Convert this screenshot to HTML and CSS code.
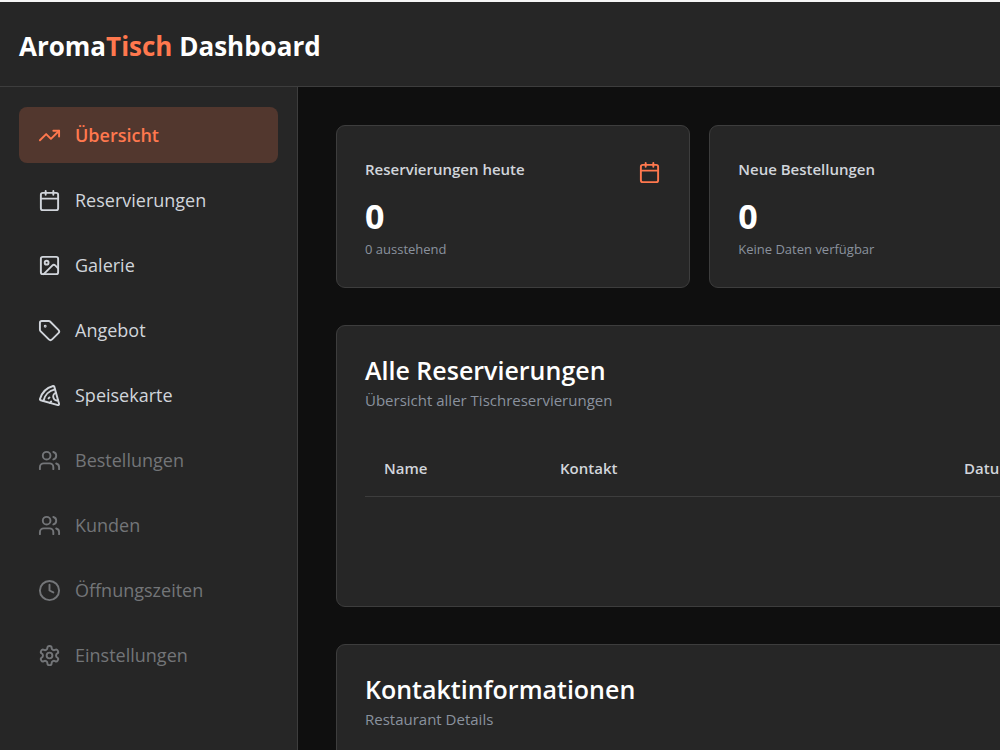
FILE: index.html
```
<!DOCTYPE html>
<html lang="de">

<head>
    <meta charset="UTF-8">
    <meta name="viewport" content="width=device-width, initial-scale=1.0">
    <title>AromaTisch Dashboard</title>
    <link rel="stylesheet" href="styles.css">
</head>

<body>
    <header class="topbar">
        <h1 class="brand">Aroma<span class="brand-accent">Tisch</span> Dashboard</h1>
    </header>

    <div class="layout">
        <!-- Sidebar -->
        <nav class="sidebar">
            <button class="nav-item active" type="button">
                <svg class="icon" viewBox="0 0 24 24"><polyline points="22 7 13.5 15.5 8.5 10.5 2 17" /><polyline points="16 7 22 7 22 13" /></svg>
                Übersicht
            </button>
            <button class="nav-item" type="button">
                <svg class="icon" viewBox="0 0 24 24"><path d="M8 2v4M16 2v4M3 10h18" /><rect x="3" y="4" width="18" height="18" rx="2" /></svg>
                Reservierungen
            </button>
            <button class="nav-item" type="button">
                <svg class="icon" viewBox="0 0 24 24"><rect x="3" y="3" width="18" height="18" rx="2" /><circle cx="9" cy="9" r="2" /><path d="m21 15-3.086-3.086a2 2 0 0 0-2.828 0L6 21" /></svg>
                Galerie
            </button>
            <button class="nav-item" type="button">
                <svg class="icon" viewBox="0 0 24 24"><path d="M12.586 2.586A2 2 0 0 0 11.172 2H4a2 2 0 0 0-2 2v7.172a2 2 0 0 0 .586 1.414l8.704 8.704a2.426 2.426 0 0 0 3.42 0l6.58-6.58a2.426 2.426 0 0 0 0-3.42z" /><circle cx="7.5" cy="7.5" r=".5" fill="currentColor" /></svg>
                Angebot
            </button>
            <button class="nav-item" type="button">
                <svg class="icon" viewBox="0 0 24 24"><path d="m12 14-1 1" /><path d="m13.75 18.25-1.25 1.42" /><path d="M17.775 5.654a15.68 15.68 0 0 0-12.121 12.12" /><path d="M18.8 9.3a1 1 0 0 0 2.1 7.7" /><path d="M21.964 20.732a1 1 0 0 1-1.232 1.232l-18-5a1 1 0 0 1-.695-1.232A19.68 19.68 0 0 1 15.732 2.037a1 1 0 0 1 1.232.695z" /></svg>
                Speisekarte
            </button>
            <button class="nav-item" type="button" disabled>
                <svg class="icon" viewBox="0 0 24 24"><path d="M16 21v-2a4 4 0 0 0-4-4H6a4 4 0 0 0-4 4v2" /><circle cx="9" cy="7" r="4" /><path d="M22 21v-2a4 4 0 0 0-3-3.87" /><path d="M16 3.13a4 4 0 0 1 0 7.75" /></svg>
                Bestellungen
            </button>
            <button class="nav-item" type="button" disabled>
                <svg class="icon" viewBox="0 0 24 24"><path d="M16 21v-2a4 4 0 0 0-4-4H6a4 4 0 0 0-4 4v2" /><circle cx="9" cy="7" r="4" /><path d="M22 21v-2a4 4 0 0 0-3-3.87" /><path d="M16 3.13a4 4 0 0 1 0 7.75" /></svg>
                Kunden
            </button>
            <button class="nav-item" type="button" disabled>
                <svg class="icon" viewBox="0 0 24 24"><circle cx="12" cy="12" r="10" /><polyline points="12 6 12 12 16 14" /></svg>
                Öffnungszeiten
            </button>
            <button class="nav-item" type="button" disabled>
                <svg class="icon" viewBox="0 0 24 24"><path d="M12.22 2h-.44a2 2 0 0 0-2 2v.18a2 2 0 0 1-1 1.73l-.43.25a2 2 0 0 1-2 0l-.15-.08a2 2 0 0 0-2.73.73l-.22.38a2 2 0 0 0 .73 2.73l.15.1a2 2 0 0 1 1 1.72v.51a2 2 0 0 1-1 1.74l-.15.09a2 2 0 0 0-.73 2.73l.22.38a2 2 0 0 0 2.73.73l.15-.08a2 2 0 0 1 2 0l.43.25a2 2 0 0 1 1 1.73V20a2 2 0 0 0 2 2h.44a2 2 0 0 0 2-2v-.18a2 2 0 0 1 1-1.73l.43-.25a2 2 0 0 1 2 0l.15.08a2 2 0 0 0 2.73-.73l.22-.39a2 2 0 0 0-.73-2.73l-.15-.08a2 2 0 0 1-1-1.74v-.5a2 2 0 0 1 1-1.74l.15-.09a2 2 0 0 0 .73-2.73l-.22-.38a2 2 0 0 0-2.73-.73l-.15.08a2 2 0 0 1-2 0l-.43-.25a2 2 0 0 1-1-1.73V4a2 2 0 0 0-2-2z" /><circle cx="12" cy="12" r="3" /></svg>
                Einstellungen
            </button>
        </nav>

        <!-- Content -->
        <main class="content">
            <section class="stats">
                <div class="card">
                    <div class="stat-head">
                        <h3 class="stat-title">Reservierungen heute</h3>
                        <svg class="icon stat-icon" viewBox="0 0 24 24"><path d="M8 2v4M16 2v4M3 10h18" /><rect x="3" y="4" width="18" height="18" rx="2" /></svg>
                    </div>
                    <p class="stat-value">0</p>
                    <p class="stat-note">0 ausstehend</p>
                </div>
                <div class="card">
                    <div class="stat-head">
                        <h3 class="stat-title">Neue Bestellungen</h3>
                    </div>
                    <p class="stat-value">0</p>
                    <p class="stat-note">Keine Daten verfügbar</p>
                </div>
            </section>

            <section class="card reservations">
                <h2 class="card-title">Alle Reservierungen</h2>
                <p class="card-text">Übersicht aller Tischreservierungen</p>
                <table class="table">
                    <thead>
                        <tr>
                            <th class="col-name">Name</th>
                            <th class="col-contact">Kontakt</th>
                            <th>Datum</th>
                        </tr>
                    </thead>
                </table>
            </section>

            <section class="card">
                <h2 class="card-title">Kontaktinformationen</h2>
                <p class="card-text">Restaurant Details</p>
            </section>
        </main>
    </div>
</body>

</html>
```
FILE: styles.css
```
* {
    box-sizing: border-box;
    margin: 0;
    padding: 0;
}

body {
    display: flex;
    flex-direction: column;
    height: 100vh;
    overflow: hidden;
    border-top: 2px solid #f5f5f5;
    background-color: #0f0f0f;
    color: #fff;
    font-family: "Open Sans", "Noto Sans", sans-serif;
}

.topbar {
    padding: 26px 19px 22px;
    background-color: #262626;
    border-bottom: 1px solid #3d3d3d;
}

.brand {
    font-size: 26px;
    font-weight: 700;
    line-height: 36px;
}

.brand-accent {
    color: #ff784e;
}

.layout {
    display: flex;
    flex: 1;
    min-height: 0;
}

/* Sidebar */
.sidebar {
    display: flex;
    flex-direction: column;
    gap: 9px;
    flex: 0 0 298px;
    padding: 20px 19px;
    background-color: #262626;
    border-right: 1px solid #3d3d3d;
}

.nav-item {
    display: flex;
    align-items: center;
    gap: 14px;
    padding: 14px 19px;
    border: none;
    border-radius: 8px;
    background: none;
    color: #d1d5db;
    font-family: inherit;
    font-size: 18px;
    line-height: 28px;
    text-align: left;
    cursor: pointer;
}

.nav-item.active {
    background-color: #52372e;
    color: #ff784e;
    font-weight: 600;
}

.nav-item:disabled {
    color: #737578;
    cursor: default;
}

.icon {
    width: 23px;
    height: 23px;
    flex: none;
    fill: none;
    stroke: currentColor;
    stroke-width: 2;
    stroke-linecap: round;
    stroke-linejoin: round;
}

/* Content */
.content {
    display: flex;
    flex-direction: column;
    gap: 37px;
    flex: 1 0 1550px;
    padding: 38px;
}

.stats {
    display: grid;
    grid-template-columns: repeat(4, 1fr);
    gap: 19px;
}

.card {
    padding: 28px;
    background-color: #262626;
    border: 1px solid #3d3d3d;
    border-radius: 9px;
}

.stat-head {
    display: flex;
    justify-content: space-between;
    align-items: flex-end;
    margin-bottom: 11px;
}

.stat-title {
    color: #d1d5db;
    font-size: 15px;
    font-weight: 600;
    line-height: 30px;
}

.stat-icon {
    color: #ff784e;
}

.stat-value {
    font-size: 34px;
    font-weight: 700;
    line-height: 42px;
}

.stat-note {
    margin-top: 2px;
    color: #8a929e;
    font-size: 13px;
    line-height: 20px;
}

.card-title {
    font-size: 25px;
    font-weight: 600;
    line-height: 32px;
}

.card-text {
    color: #8a929e;
    font-size: 15px;
    line-height: 28px;
}

.reservations {
    min-height: 282px;
}

.table {
    width: 100%;
    margin-top: 26px;
    border-collapse: collapse;
    table-layout: fixed;
}

.table th {
    padding: 14px 19px;
    border-bottom: 1px solid #3d3d3d;
    color: #d1d5db;
    font-size: 15px;
    font-weight: 600;
    line-height: 28px;
    text-align: left;
}

.col-name {
    width: 176px;
}

.col-contact {
    width: 404px;
}
```
